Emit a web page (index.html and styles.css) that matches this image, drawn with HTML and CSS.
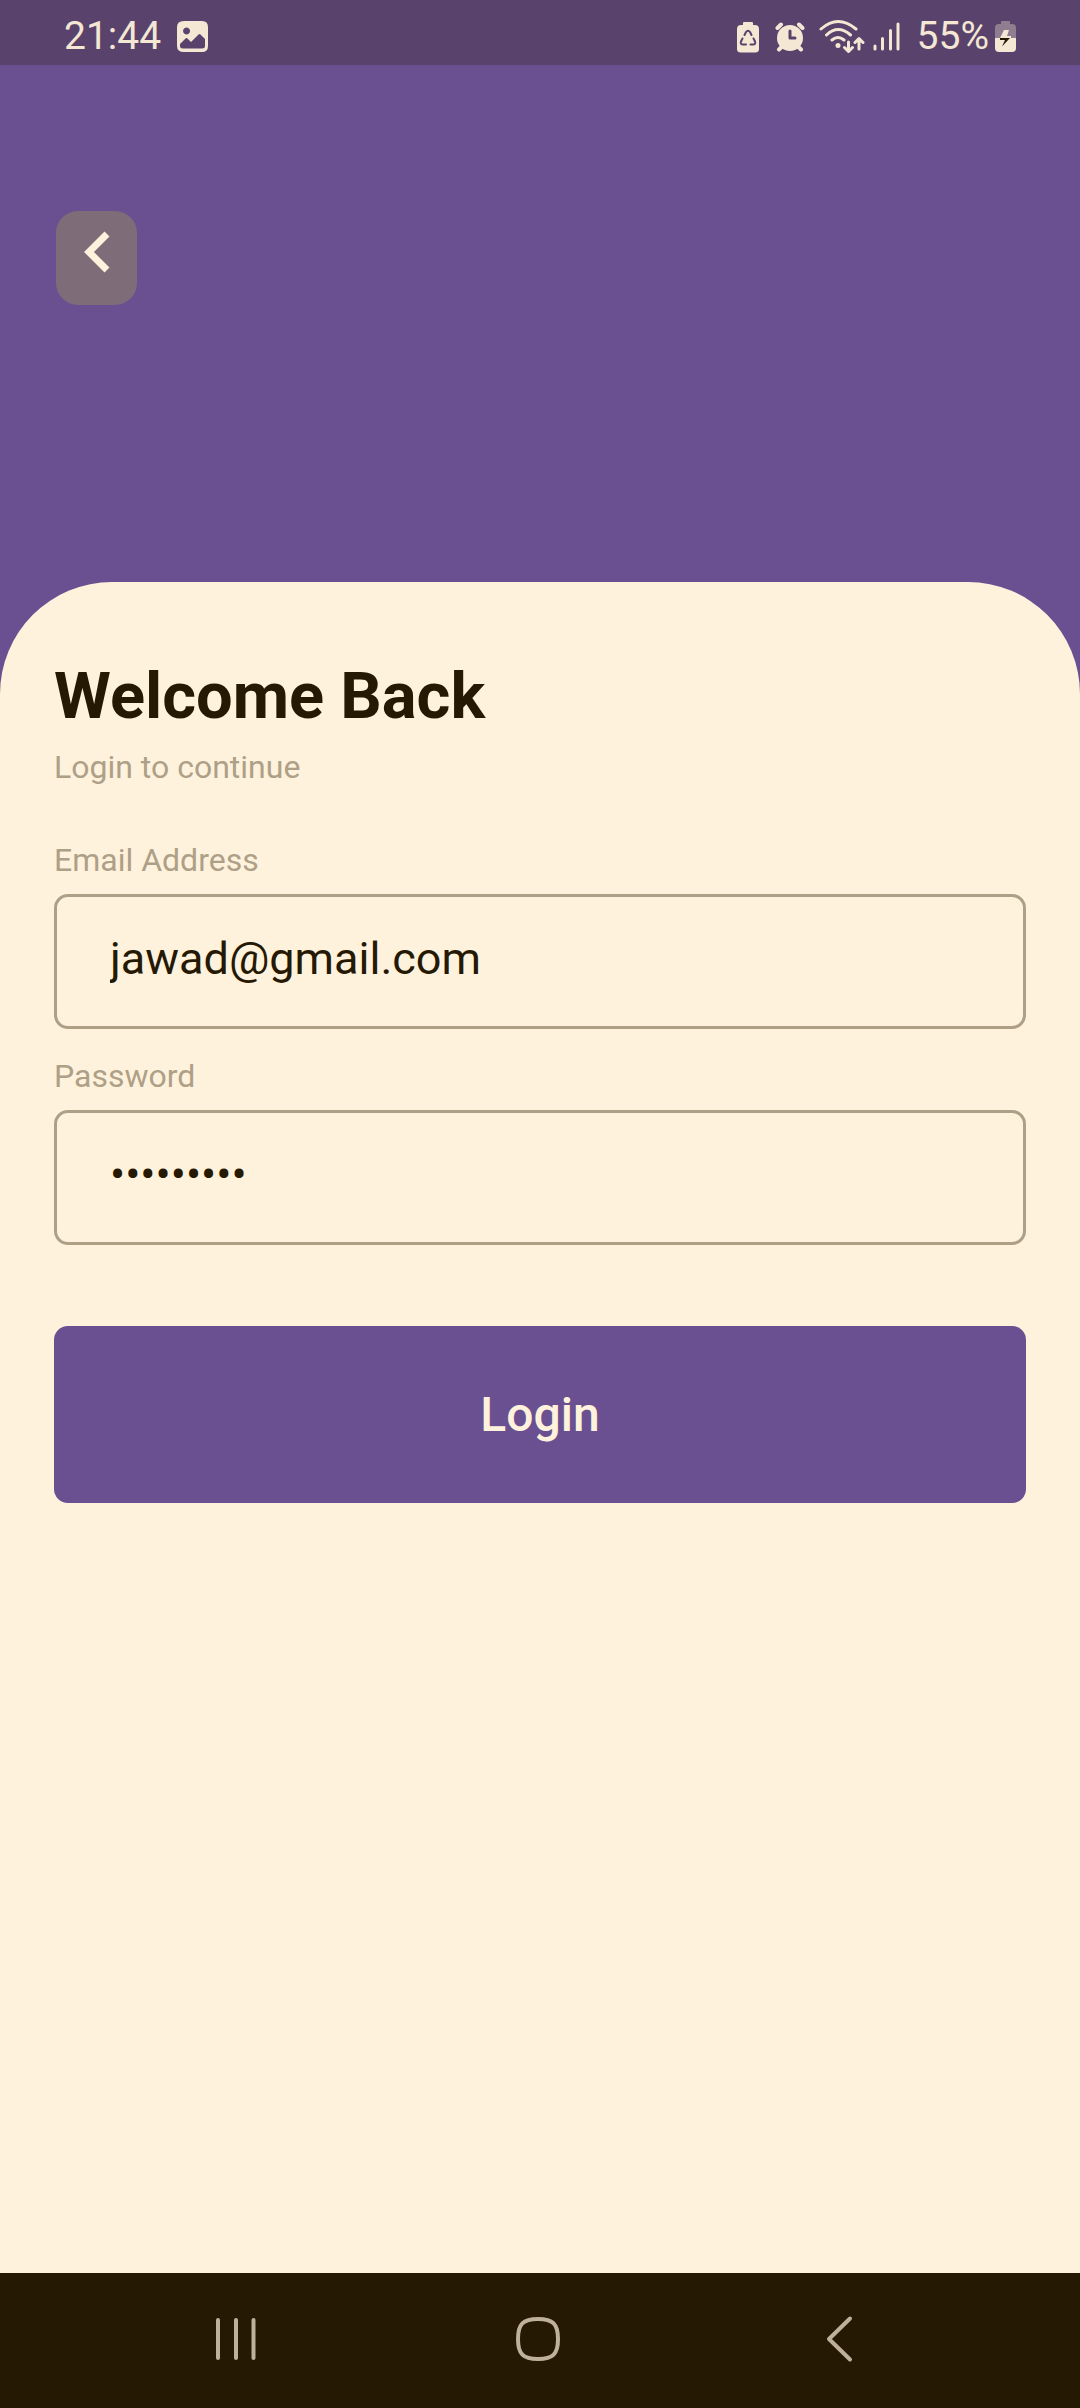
FILE: index.html
```html
<!DOCTYPE html>
<html lang="en">
<head>
<meta charset="utf-8">
<meta name="viewport" content="width=device-width, initial-scale=1">
<title>Login</title>
<link rel="stylesheet" href="styles.css">
</head>
<body>
<div class="screen">
  <div class="status-bar">
    <div class="status-left">
      <span>21:44</span>
      <svg width="32" height="36" viewBox="0 0 32 36" aria-hidden="true">
        <path fill="currentColor" fill-rule="evenodd" d="M7 3H25Q31 3 31 9V28Q31 34 25 34H7Q0 34 0 28V9Q0 3 7 3ZM9.500 9.500A3.500 3.500 0 1 0 9.600 9.500ZM3 26V28Q3 30.500 6 30.500H25Q28 30.500 28 28V21L23.500 16.500Q22.500 15.500 21.500 16.500L14 24L10.500 20.500Q9.500 19.500 8.500 20.500Z"/>
      </svg>
    </div>
    <div class="status-right">
      <svg width="22" height="36" viewBox="0 0 22 36" aria-hidden="true">
        <path fill="currentColor" d="M6 7V5Q6 4 7 4H15Q16 4 16 5V7H18Q22 7 22 11V31Q22 34.500 18 34.500H4Q0 34.500 0 31V11Q0 7 4 7Z"/>
        <path class="cutout" d="M7.500 17L9 14Q11 11.500 13 14L14.500 17M16.500 20.500L18 23.500Q19 26.500 16 26.500H13.500M9 26.500H6Q3 26.500 4 23.500L5.500 20.500"/>
      </svg>
      <svg class="alarm" width="30" height="36" viewBox="0 0 30 36" aria-hidden="true">
        <circle cx="15" cy="20" r="13" fill="currentColor"/>
        <path class="line thick" d="M2.500 10L6 6.500M27.500 10L24 6.500M4 31.500L7 28.500M26 31.500L23 28.500"/>
        <path class="cutout hand" d="M15 13V20H20"/>
      </svg>
      <svg class="wifi" width="46" height="36" viewBox="0 0 46 36" aria-hidden="true">
        <path class="line" d="M2 11Q19 -4 37 11M7.500 17Q19 6 31.500 17M13 22Q19 17 25 22"/>
        <circle cx="19" cy="27.500" r="2.500" fill="currentColor"/>
        <path class="line" d="M29.500 24V33M25.500 29.500L29.500 33.500L33.500 29.500M40 31V21M36 24.500L40 20.500L44 24.500"/>
      </svg>
      <svg class="signal" width="28" height="36" viewBox="0 0 28 36" aria-hidden="true">
        <path class="line" d="M2 28V31M9.500 20.500V31M17.500 12.500V31M25 6V31"/>
      </svg>
      <span>55%</span>
      <svg class="battery" width="21" height="36" viewBox="0 0 21 36" aria-hidden="true">
        <path fill="#907e90" d="M6 6V4Q6 3 7 3H14Q15 3 15 4V6H17Q21 6 21 10V20H0V10Q0 6 4 6Z"/>
        <path fill="currentColor" d="M0 20H21V30Q21 34 17 34H4Q0 34 0 30Z"/>
        <path fill="currentColor" d="M9 12H14L12 18H16V20H5Z"/>
        <path fill="#251904" d="M5 20H15L7 28.500L10 22H5Z"/>
      </svg>
    </div>
  </div>

  <header class="hero">
    <button class="back" type="button" aria-label="Go back">
      <svg width="26" height="42" viewBox="0 0 26 42" aria-hidden="true">
        <path d="M23 3L5 21L23 39"/>
      </svg>
    </button>
  </header>

  <main class="card">
    <h1>Welcome Back</h1>
    <p class="subtitle">Login to continue</p>
    <form class="form">
      <label for="email">Email Address</label>
      <input id="email" type="email" value="jawad@gmail.com">
      <label for="password">Password</label>
      <input id="password" type="password" value="jawad1234">
      <button class="login" type="submit">Login</button>
    </form>
  </main>

  <nav class="nav-bar" aria-label="System navigation">
    <button type="button" aria-label="Recent apps">
      <svg width="44" height="48" viewBox="0 0 44 48" aria-hidden="true">
        <path d="M4 5V43M22 5V43M39.500 5V43"/>
      </svg>
    </button>
    <button type="button" aria-label="Home">
      <svg width="44" height="48" viewBox="0 0 44 48" aria-hidden="true">
        <path d="M22 4C37 4 42 9 42 24C42 39 37 44 22 44C7 44 2 39 2 24C2 9 7 4 22 4Z"/>
      </svg>
    </button>
    <button type="button" aria-label="Back">
      <svg width="44" height="48" viewBox="0 0 44 48" aria-hidden="true">
        <path d="M32 3.500L11 24L32 44.500"/>
      </svg>
    </button>
  </nav>
</div>
</body>
</html>
```
FILE: styles.css
```css
* {
  box-sizing: border-box;
}

body {
  margin: 0;
  background: #6a5091;
  font-family: Roboto, "Liberation Sans", sans-serif;
  color: #251904;
}

button {
  border: 0;
  padding: 0;
  font-family: inherit;
}

svg {
  display: block;
  flex: none;
}

.screen {
  display: flex;
  flex-direction: column;
  min-height: 100vh;
}

.status-bar {
  display: flex;
  justify-content: space-between;
  height: 65px;
  padding: 7px 64px 0;
  background: #59436d;
  color: #f4e7d3;
  font-size: 39px;
}

.status-left,
.status-right {
  display: flex;
  align-items: center;
}

.status-left {
  gap: 16px;
}

.alarm {
  margin-left: 16px;
}

.wifi {
  margin-left: 14px;
}

.signal {
  margin: 0 16px 0 8px;
}

.battery {
  margin-left: 6px;
}

.line,
.cutout {
  fill: none;
  stroke: currentColor;
  stroke-width: 3;
  stroke-linecap: round;
  stroke-linejoin: round;
}

.thick {
  stroke-width: 4;
}

.cutout {
  stroke: #59436d;
  stroke-width: 2;
}

.hand {
  stroke-width: 3;
}

.hero {
  padding: 146px 56px 277px;
}

.back {
  display: grid;
  justify-items: center;
  width: 81px;
  height: 94px;
  padding-top: 20px;
  align-items: start;
  border-radius: 22px;
  background: #7e6c78;
}

.back path {
  fill: none;
  stroke: #fff2dd;
  stroke-width: 7;
}

.card {
  flex: 1;
  padding: 76px 54px;
  border-radius: 112px 112px 0 0;
  background: #fff2dd;
}

h1 {
  margin: 0;
  font-size: 65px;
  line-height: 76px;
  font-weight: 700;
}

.subtitle {
  margin: 13px 0 53px;
}

.subtitle,
label {
  font-size: 32px;
  line-height: 40px;
  color: #aea087;
}

.form {
  display: flex;
  flex-direction: column;
}

input {
  height: 135px;
  margin: 14px 0 27px;
  padding: 0 53px 6px;
  border: 3px solid #aea087;
  border-radius: 14px;
  outline: 0;
  background: transparent;
  font-family: inherit;
  font-size: 45px;
  color: #251904;
}

.login {
  height: 177px;
  margin-top: 54px;
  border-radius: 14px;
  background: #6a5091;
  color: #fff2dd;
  font-size: 48px;
  font-weight: 500;
}

.nav-bar {
  display: flex;
  justify-content: space-between;
  align-items: center;
  height: 135px;
  padding: 0 218px 3px 214px;
  background: #251904;
}

.nav-bar button {
  background: transparent;
}

.nav-bar path {
  fill: none;
  stroke: #beb099;
  stroke-width: 4;
  stroke-linecap: round;
  stroke-linejoin: round;
}
```
